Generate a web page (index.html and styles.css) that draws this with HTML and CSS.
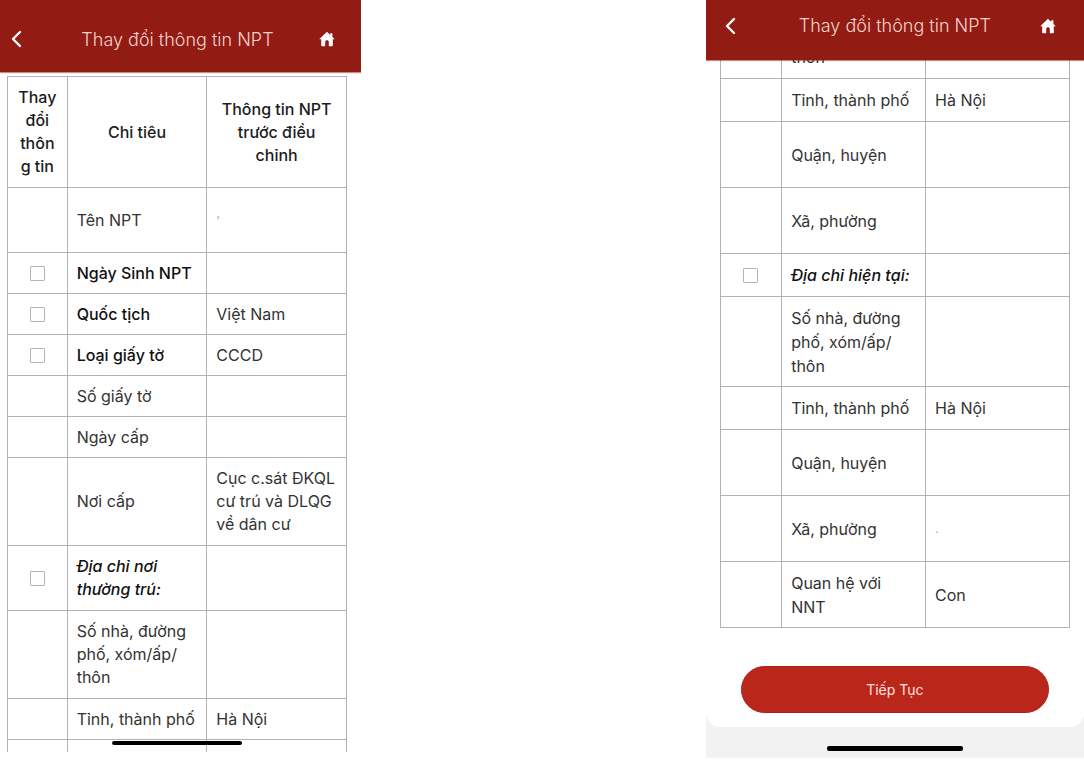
FILE: index.html
```
<!DOCTYPE html>
<html lang="vi">
<head>
    <meta charset="UTF-8">
    <meta name="viewport" content="width=device-width, initial-scale=1.0">
    <title>Thay đổi thông tin NPT</title>
    <link rel="stylesheet" href="styles.css">
</head>
<body>
    <div class="screens">
        <section class="screen screen-first">
            <header class="topbar">
                <button type="button" class="icon-btn back" aria-label="Quay lại">
                    <svg width="12" height="18" viewBox="0 0 12 18" fill="none">
                        <path d="M10 2L3 9L10 16" stroke="currentColor" stroke-width="2.4" stroke-linecap="round" stroke-linejoin="round"/>
                    </svg>
                </button>
                <h1>Thay đổi thông tin NPT</h1>
                <a href="#" class="icon-btn" aria-label="Trang chủ">
                    <svg width="16" height="16" viewBox="0 0 16 16">
                        <path d="M8 0.8L0.2 8.3H2.2V14.4C2.2 14.8 2.5 15.2 3 15.2H6.2V10.8C6.2 9.8 7 9.2 8 9.2S9.8 9.8 9.8 10.8V15.2H13C13.5 15.2 13.8 14.8 13.8 14.4V8.3H15.8L13.4 6V2.2H11.2V3.9Z" fill="currentColor"/>
                    </svg>
                </a>
            </header>

            <main class="content">
                <table class="info-table">
                    <colgroup>
                        <col class="col-check">
                        <col class="col-name">
                        <col class="col-value">
                    </colgroup>
                    <thead>
                        <tr>
                            <th>Thay đổi thông tin</th>
                            <th>Chi tiêu</th>
                            <th>Thông tin NPT trước điều chỉnh</th>
                        </tr>
                    </thead>
                    <tbody>
                        <tr class="row-double"><td></td><td>Tên NPT</td><td class="faint">'</td></tr>
                        <tr>
                            <td class="check"><input type="checkbox" id="birthday"></td>
                            <td><label for="birthday">Ngày Sinh NPT</label></td>
                            <td></td>
                        </tr>
                        <tr>
                            <td class="check"><input type="checkbox" id="nation"></td>
                            <td><label for="nation">Quốc tịch</label></td>
                            <td>Việt Nam</td>
                        </tr>
                        <tr>
                            <td class="check"><input type="checkbox" id="paper"></td>
                            <td><label for="paper">Loại giấy tờ</label></td>
                            <td>CCCD</td>
                        </tr>
                        <tr><td></td><td>Số giấy tờ</td><td></td></tr>
                        <tr><td></td><td>Ngày cấp</td><td></td></tr>
                        <tr class="row-triple"><td></td><td>Nơi cấp</td><td>Cục c.sát ĐKQL cư trú và DLQG về dân cư</td></tr>
                        <tr class="row-double">
                            <td class="check"><input type="checkbox" id="home-address"></td>
                            <td><label class="group" for="home-address">Địa chỉ nơi thường trú:</label></td>
                            <td></td>
                        </tr>
                        <tr class="row-triple"><td></td><td>Số nhà, đường phố, xóm/ấp/<wbr>thôn</td><td></td></tr>
                        <tr><td></td><td>Tỉnh, thành phố</td><td>Hà Nội</td></tr>
                        <tr><td></td><td></td><td></td></tr>
                    </tbody>
                </table>
            </main>
            <div class="home-indicator"></div>
        </section>

        <section class="screen screen-last">
            <header class="topbar">
                <button type="button" class="icon-btn back" aria-label="Quay lại">
                    <svg width="12" height="18" viewBox="0 0 12 18" fill="none">
                        <path d="M10 2L3 9L10 16" stroke="currentColor" stroke-width="2.4" stroke-linecap="round" stroke-linejoin="round"/>
                    </svg>
                </button>
                <h1>Thay đổi thông tin NPT</h1>
                <a href="#" class="icon-btn" aria-label="Trang chủ">
                    <svg width="16" height="16" viewBox="0 0 16 16">
                        <path d="M8 0.8L0.2 8.3H2.2V14.4C2.2 14.8 2.5 15.2 3 15.2H6.2V10.8C6.2 9.8 7 9.2 8 9.2S9.8 9.8 9.8 10.8V15.2H13C13.5 15.2 13.8 14.8 13.8 14.4V8.3H15.8L13.4 6V2.2H11.2V3.9Z" fill="currentColor"/>
                    </svg>
                </a>
            </header>

            <!-- scrolled to the end of the form -->
            <main class="content">
                <table class="info-table">
                    <colgroup>
                        <col class="col-check">
                        <col class="col-name">
                        <col class="col-value">
                    </colgroup>
                    <tbody>
                        <tr><td></td><td>thôn</td><td></td></tr>
                        <tr><td></td><td>Tỉnh, thành phố</td><td>Hà Nội</td></tr>
                        <tr class="row-double"><td></td><td>Quận, huyện</td><td></td></tr>
                        <tr class="row-double"><td></td><td>Xã, phường</td><td></td></tr>
                        <tr>
                            <td class="check"><input type="checkbox" id="current-address"></td>
                            <td><label class="group" for="current-address">Địa chỉ hiện tại:</label></td>
                            <td></td>
                        </tr>
                        <tr class="row-triple"><td></td><td>Số nhà, đường phố, xóm/ấp/<wbr>thôn</td><td></td></tr>
                        <tr><td></td><td>Tỉnh, thành phố</td><td>Hà Nội</td></tr>
                        <tr class="row-double"><td></td><td>Quận, huyện</td><td></td></tr>
                        <tr class="row-double"><td></td><td>Xã, phường</td><td class="faint">.</td></tr>
                        <tr class="row-double"><td></td><td>Quan hệ với NNT</td><td>Con</td></tr>
                    </tbody>
                </table>
                <button type="button" class="btn">Tiếp Tục</button>
            </main>
            <div class="home-indicator"></div>
        </section>
    </div>
</body>
</html>
```
FILE: styles.css
```
:root {
    --red-dark: #921b13;
    --red: #bb261b;
    --line: #b2b2b2;
    --text: #333;
}

* {
    box-sizing: border-box;
}

body {
    margin: 0;
    background: #fff;
    color: var(--text);
    font-family: Inter, "Open Sans", sans-serif;
    font-size: 16px;
}

.screens {
    display: flex;
    justify-content: space-between;
    align-items: flex-start;
    height: 100vh;
    overflow: hidden;
}

.screen {
    position: relative;
    display: flex;
    flex-direction: column;
    overflow: hidden;
}

.screen-first {
    --line-height: 23px;
    --row: 41px;
    --row-double: 65px;
    --row-triple: 88px;
    width: 33.3%;
    height: calc(100vh - 14px);
}

.screen-last {
    --line-height: 24px;
    --row: 43px;
    --row-double: 66px;
    --row-triple: 90px;
    width: 34.9%;
    height: calc(100vh - 8px);
    background: #f2f2f2;
}

/* Top bar */
.topbar {
    display: flex;
    align-items: center;
    justify-content: space-between;
    flex-shrink: 0;
    position: relative;
    z-index: 1;
    height: 72px;
    padding: 6px 26px 0 10px;
    background: var(--red-dark);
    color: #fff;
    box-shadow: 0 1px 1px rgba(146, 27, 19, 0.5);
}

.screen-last .topbar {
    height: 60px;
    padding: 0 28px 9px 18px;
}

.topbar h1 {
    margin: 0;
    color: #f3d3cf;
    font-size: 18px;
    font-weight: 300;
}

.icon-btn {
    display: flex;
    padding: 0;
    border: none;
    background: none;
    color: #fff;
    cursor: pointer;
}

.back {
    width: 26px;
}

/* Table */
.content {
    flex: 1;
    min-height: 0;
    padding: 4px 14px 0 7px;
    overflow: hidden;
    background: #fff;
}

.screen-last .content {
    display: flex;
    flex-direction: column;
    justify-content: flex-end;
    padding: 0 14px 14px;
    border-radius: 0 0 14px 14px;
}

.info-table {
    width: 100%;
    table-layout: fixed;
    border-collapse: collapse;
    line-height: var(--line-height);
}

.col-check {
    width: 17.6%;
}

.info-table tr {
    height: var(--row);
}

.info-table .row-double {
    height: var(--row-double);
}

.info-table .row-triple {
    height: var(--row-triple);
}

.info-table th,
.info-table td {
    padding: 8px 9px;
    border: 1px solid var(--line);
    text-align: left;
    vertical-align: middle;
}

.info-table th {
    padding: 9px;
    color: #1c1c1c;
    font-weight: 500;
    text-align: center;
    overflow-wrap: anywhere;
}

.info-table .check {
    padding: 0;
    text-align: center;
}

.info-table label {
    color: #111;
    font-weight: 500;
}

.info-table .group {
    font-style: italic;
}

.info-table .faint {
    color: #aaa;
    font-size: 12px;
}

input[type="checkbox"] {
    appearance: none;
    display: block;
    width: 15px;
    height: 15px;
    margin: 0 auto;
    border: 1px solid #b5b5b5;
    border-radius: 1px;
    background: #fff;
}

input[type="checkbox"]:checked {
    background: var(--red);
}

.btn {
    flex-shrink: 0;
    height: 47px;
    margin: 38px 21px 0;
    border: 1px solid #a92219;
    border-radius: 24px;
    background: var(--red);
    color: #fbe3e0;
    font-family: inherit;
    font-size: 14px;
    cursor: pointer;
}

/* iOS home bar */
.home-indicator {
    position: absolute;
    bottom: 7px;
    left: 49%;
    width: 36%;
    height: 4px;
    border-radius: 2px;
    background: #000;
    transform: translateX(-50%);
}

.screen-last .content + .home-indicator {
    position: static;
    flex-shrink: 0;
    height: 5px;
    margin: 19px auto 7px;
    transform: none;
}
```
